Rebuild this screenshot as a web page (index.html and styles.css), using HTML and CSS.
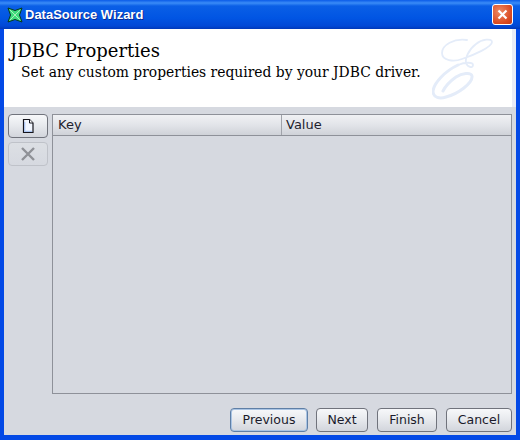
FILE: index.html
```html
<!DOCTYPE html>
<html lang="en">
<head>
  <meta charset="UTF-8" />
  <title>DataSource Wizard</title>
  <link rel="stylesheet" href="styles.css">
</head>
<body>

<div class="window">
  <div class="titlebar">
    <svg class="app-icon" width="16" height="16" viewBox="0 0 16 16">
      <path d="M1 1 L8 3.5 L15 1 L12.5 8 L15 15 L8 12.5 L1 15 L3.5 8 Z" fill="#3fdc7c" stroke="#06351f" stroke-width="1"/>
      <path d="M3 3 L13 13 M13 3 L3 13" stroke="#a8f0b8" stroke-width="1"/>
    </svg>
    <span class="title-text">DataSource Wizard</span>
    <div class="close-btn">
      <svg width="11" height="11" viewBox="0 0 11 11">
        <path d="M1.5 1.5 L9.5 9.5 M9.5 1.5 L1.5 9.5" stroke="#fff" stroke-width="2.2"/>
      </svg>
    </div>
  </div>

  <div class="client">
    <div class="banner">
      <div class="banner-text">
        <h1>JDBC Properties</h1>
        <p>Set any custom properties required by your JDBC driver.</p>
      </div>
      <svg class="watermark" width="62" height="64" viewBox="0 0 62 64" fill="none" stroke="#e4ecf9" stroke-linecap="round">
        <path stroke-width="1.8" d="M35 3 C22 1 10 8 10 16 C10 24 22 25 30 22 C42 18 60 10 60 5 C60 1 50 2 44 7 C36 13 33 22 34 26 C36 31 41 31 41 28 C41 25 33 25 26 28"/>
        <path stroke-width="3" d="M26 28 C13 34 2 46 1 54 C1 61 8 62 14 60 C26 57 41 46 40 39 C39 35 30 36 24 40 C17 45 13 50 11 54"/>
      </svg>
    </div>

    <div class="main">
      <div class="side-buttons">
        <button class="btn side-btn">
          <svg width="14" height="16" viewBox="0 0 14 16">
            <path d="M2.5 1.5 H8.5 L12 5 V14.5 H2.5 Z" fill="#f2f6fe" stroke="#14141c" stroke-width="1.2"/>
            <path d="M8.5 1.5 V5 H12" fill="#fff" stroke="#14141c"/>
            <path d="M3.7 4 V13.4 H11" fill="none" stroke="#a9c4f2" stroke-width="1.2"/>
          </svg>
        </button>
        <button class="btn side-btn disabled">
          <svg width="16" height="16" viewBox="0 0 16 16">
            <path d="M2 2 L14 14 M14 2 L2 14" stroke="#8f9197" stroke-width="2.4"/>
          </svg>
        </button>
      </div>
      <div class="table">
        <div class="table-head">
          <div class="col col-key">Key</div>
          <div class="col col-value">Value</div>
        </div>
      </div>
    </div>

    <div class="footer">
      <button class="btn foot-btn default prev">Previous</button>
      <button class="btn foot-btn next">Next</button>
      <button class="btn foot-btn finish">Finish</button>
      <button class="btn foot-btn cancel">Cancel</button>
    </div>
  </div>
</div>

</body>
</html>
```

FILE: styles.css
```css
html, body {
  margin: 0; padding: 0;
  width: 520px; height: 440px;
  overflow: hidden;
  background: #0a4be0;
}
.window {
  width: 520px; height: 440px;
  display: flex;
  flex-direction: column;
  box-sizing: border-box;
  border-radius: 7px 7px 0 0;
  background: #0349e6;
  font-family: "DejaVu Sans", sans-serif;
}
.titlebar {
  height: 29px;
  flex: none;
  display: flex;
  align-items: center;
  padding: 0 7px 0 7px;
  background: linear-gradient(#0a5be8 0, #3a8cf7 3px, #0a5fe6 6px, #0155e3 18px, #0148d6 26px, #0038b8 29px);
}
.app-icon { flex: none; margin-right: 2px; }
.title-text {
  color: #fff;
  font-family: "Liberation Sans", sans-serif;
  font-weight: bold;
  font-size: 13px;
  text-shadow: 1px 1px 0 #0a2a90;
  flex: 1;
}
.close-btn {
  width: 19px; height: 19px;
  margin-top: -1px;
  border: 1px solid #fff;
  border-radius: 3px;
  background: radial-gradient(circle at 35% 35%, #ee8a64, #d9481f 70%, #c0391a);
  display: flex;
  align-items: center;
  justify-content: center;
}
.client {
  flex: 1;
  margin: 0 4px 5px;
  display: flex;
  flex-direction: column;
  background: #d6d9e0;
  min-height: 0;
}
.banner {
  height: 78px;
  flex: none;
  display: flex;
  justify-content: space-between;
  background: #fff;
  border-right: 4px solid #e9ebf6;
}
.banner-text { padding: 12px 0 0 6px; }
.banner h1 {
  margin: 0;
  font-family: "DejaVu Serif", serif;
  font-weight: normal;
  font-size: 18px;
  line-height: 20px;
  color: #000;
}
.banner p {
  margin: 1px 0 0 11px;
  font-family: "DejaVu Serif", serif;
  font-size: 13.87px;
  line-height: 20px;
  color: #000;
}
.watermark { margin: 8px 18px 0 0; filter: blur(0.4px); }
.main {
  flex: 1;
  min-height: 0;
  display: flex;
  gap: 4px;
  padding: 7px 4px 0 4px;
}
.side-buttons {
  width: 40px;
  flex: none;
  display: flex;
  flex-direction: column;
  gap: 4px;
}
.btn {
  padding: 0;
  box-sizing: border-box;
  font-family: "DejaVu Sans", sans-serif;
  font-size: 12.5px;
  color: #1a1a2a;
  border: 1px solid #70737c;
  border-radius: 4px;
  background: linear-gradient(#f7f8fa, #e8eaee 45%, #d2d5dc 100%);
  display: flex;
  align-items: center;
  justify-content: center;
}
.side-btn { height: 24px; }
.side-btn.disabled {
  border-color: #bfc2c9;
  background: linear-gradient(#dcdfe4, #d6d9e0);
}
.table {
  flex: 1;
  border: 1px solid #8e9199;
  box-sizing: border-box;
  background: #d6d9e0;
}
.table-head {
  display: flex;
  height: 20px;
  border-bottom: 1px solid #8e9199;
  background: linear-gradient(#f0f1f4, #e2e4e9 50%, #cfd2d8);
  font-size: 13px;
  line-height: 20px;
  color: #22222e;
}
.col { box-sizing: border-box; padding-left: 5px; }
.col-key { width: 229px; border-right: 1px solid #a0a3aa; }
.col-value { flex: 1; padding-left: 4px; }
.footer {
  flex: none;
  height: 41px;
  box-sizing: border-box;
  padding: 14px 4px 3px 0;
  display: flex;
  justify-content: flex-end;
}
.foot-btn { height: 24px; padding-bottom: 2px; }
.foot-btn.default {
  border: 1px solid #5f7fa6;
  box-shadow: inset 0 0 0 1px #a9c4e4;
}
.prev { width: 78px; margin-right: 8px; }
.next { width: 52px; margin-right: 9px; }
.finish { width: 60px; margin-right: 9px; }
.cancel { width: 66px; }
```
